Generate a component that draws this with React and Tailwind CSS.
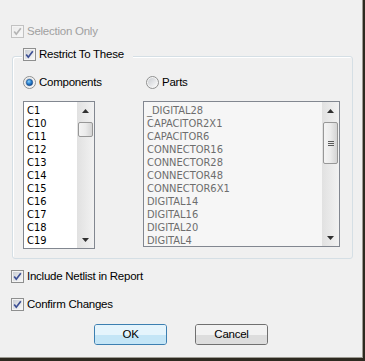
import React, { useId } from "react";

const UI_FONT = { fontFamily: '"Liberation Sans", Arial, sans-serif' };
const LIST_FONT = { fontFamily: '"DejaVu Sans Condensed", "Liberation Sans", sans-serif' };

const COMPONENTS = ["C1", "C10", "C11", "C12", "C13", "C14", "C15", "C16", "C17", "C18", "C19"];
const PARTS = [
  "_DIGITAL28",
  "CAPACITOR2X1",
  "CAPACITOR6",
  "CONNECTOR16",
  "CONNECTOR28",
  "CONNECTOR48",
  "CONNECTOR6X1",
  "DIGITAL14",
  "DIGITAL16",
  "DIGITAL20",
  "DIGITAL4",
];

function CheckBox({ disabled }) {
  const id = useId().replace(/:/g, "");
  const edge = disabled ? "#c2c2c2" : "#8e8f8f";
  const tick = disabled ? "#b4b4b4" : "#3c4f94";
  return (
    <svg width="13" height="13" viewBox="0 0 13 13" className="shrink-0">
      <defs>
        <linearGradient id={`cb${id}`} x1="0" y1="0" x2="1" y2="1">
          <stop offset="0" stopColor={disabled ? "#ececec" : "#cbcfd5"} />
          <stop offset="1" stopColor="#f7f7f7" />
        </linearGradient>
      </defs>
      <rect x="0.5" y="0.5" width="12" height="12" fill="#f4f4f4" stroke={edge} />
      <rect x="2" y="2" width="9" height="9" fill={`url(#cb${id})`} />
      <path d="M3.2 6.4 L5.3 9.2 L9.8 3.2" fill="none" stroke={tick} strokeWidth="1.7" />
    </svg>
  );
}

function Radio({ checked }) {
  const id = useId().replace(/:/g, "");
  return (
    <svg width="13" height="13" viewBox="0 0 13 13" className="shrink-0">
      <defs>
        <linearGradient id={`rb${id}`} x1="0" y1="0" x2="1" y2="1">
          <stop offset="0" stopColor="#c9ccd1" />
          <stop offset="1" stopColor="#fbfbfb" />
        </linearGradient>
        <radialGradient id={`rd${id}`} cx="0.4" cy="0.35" r="0.7">
          <stop offset="0" stopColor="#8fd3fb" />
          <stop offset="0.5" stopColor="#2a83d2" />
          <stop offset="1" stopColor="#0b3f86" />
        </radialGradient>
      </defs>
      <circle cx="6.5" cy="6.5" r="6" fill="#f4f4f4" stroke="#8e8f8f" />
      <circle cx="6.5" cy="6.5" r="4.5" fill={`url(#rb${id})`} />
      {checked && <circle cx="6.5" cy="6.5" r="3.2" fill={`url(#rd${id})`} stroke="#1c4f8c" strokeWidth="0.6" />}
    </svg>
  );
}

function Arrow({ down }) {
  return (
    <svg width="7" height="4" viewBox="0 0 7 4">
      <path d={down ? "M0 0 L7 0 L3.5 4 Z" : "M0 4 L3.5 0 L7 4 Z"} fill="#303030" />
    </svg>
  );
}

function ScrollBar({ thumbHeight, grip }) {
  return (
    <div className="flex h-full w-[17px] shrink-0 flex-col bg-linear-to-r from-[#e1e1e1] to-[#f2f2f2]">
      <div className="flex h-[17px] items-center justify-center">
        <Arrow />
      </div>
      <div
        className="mx-[1px] mt-[3px] flex flex-col items-center justify-center gap-[1px] rounded-[2px] border border-[#979797] bg-linear-to-r from-[#f4f4f4] via-[#ebebeb] to-[#d4d4d4]"
        style={{ height: thumbHeight }}
      >
        {grip &&
          [0, 1, 2].map((n) => <div key={n} className="h-[1px] w-[6px] bg-[#5a5a5a]" />)}
      </div>
      <div className="flex-1" />
      <div className="flex h-[17px] items-center justify-center">
        <Arrow down />
      </div>
    </div>
  );
}

function ListBox({ items, width, height, disabled, thumbHeight, grip }) {
  return (
    <div
      className={`flex border border-[#828790] ${disabled ? "bg-[#f6f6f6] text-[#6d6d6d]" : "bg-white text-black"}`}
      style={{ width, height }}
    >
      <div className="flex-1 pl-[3px] pt-[2px] text-[11px] leading-[13px] tracking-normal" style={LIST_FONT}>
        {items.map((item) => (
          <div key={item} className="whitespace-nowrap">
            {item}
          </div>
        ))}
      </div>
      <ScrollBar thumbHeight={thumbHeight} grip={grip} />
    </div>
  );
}

function Button({ label, isDefault }) {
  return (
    <div
      className={`relative flex h-[21px] w-[73px] items-center justify-center overflow-hidden rounded-[3px] border text-black ${
        isDefault ? "border-[#3c7fb1]" : "border-[#707070]"
      }`}
    >
      <div className="absolute inset-0 flex flex-col">
        <div className={`flex-1 ${isDefault ? "bg-[#e5f4fc]" : "bg-[#f2f2f2]"}`} />
        <div className={`flex-1 ${isDefault ? "bg-[#c4e5f6]" : "bg-[#dddddd]"}`} />
      </div>
      <span className="relative">{label}</span>
    </div>
  );
}

export default function App() {
  return (
    <div className="h-[361px] w-[365px] overflow-hidden bg-[#2e2a20]">
      <div
        className="flex h-[358px] w-[363px] flex-col border-r border-b border-[#9c9a92] bg-[#f0f0f0] text-[11.5px] tracking-[-0.25px] text-black"
        style={UI_FONT}
      >
        <div className="ml-[11px] mt-[25px] flex h-[13px] items-center gap-[3px] text-[#a0a0a0]">
          <CheckBox disabled />
          <span>Selection Only</span>
        </div>

        <div className="relative ml-[12px] mt-[18px] h-[203px] w-[341px] rounded-[3px] border border-[#d5dfe5] shadow-[inset_1px_1px_0_#ffffff]">
          <div className="absolute -top-[9px] left-[9px] flex h-[13px] items-center gap-[3px] bg-[#f0f0f0] pl-[1px] pr-[9px]">
            <CheckBox />
            <span>Restrict To These</span>
          </div>

          <div className="mt-[19px] flex h-[13px] pl-[10px]">
            <div className="flex w-[123px] items-center gap-[3px]">
              <Radio checked />
              <span>Components</span>
            </div>
            <div className="flex items-center gap-[3px]">
              <Radio />
              <span>Parts</span>
            </div>
          </div>

          <div className="mt-[12px] flex items-start pl-[10px]">
            <ListBox items={COMPONENTS} width={72} height={148} thumbHeight={15} />
            <div className="ml-[48px]">
              <ListBox items={PARTS} width={197} height={146} disabled thumbHeight={42} grip />
            </div>
          </div>
        </div>

        <div className="ml-[11px] mt-[11px] flex h-[13px] items-center gap-[3px]">
          <CheckBox />
          <span>Include Netlist in Report</span>
        </div>
        <div className="ml-[11px] mt-[15px] flex h-[13px] items-center gap-[3px]">
          <CheckBox />
          <span>Confirm Changes</span>
        </div>

        <div className="ml-[94px] mt-[13px] flex gap-[28px]">
          <Button label="OK" isDefault />
          <Button label="Cancel" />
        </div>
      </div>
    </div>
  );
}
